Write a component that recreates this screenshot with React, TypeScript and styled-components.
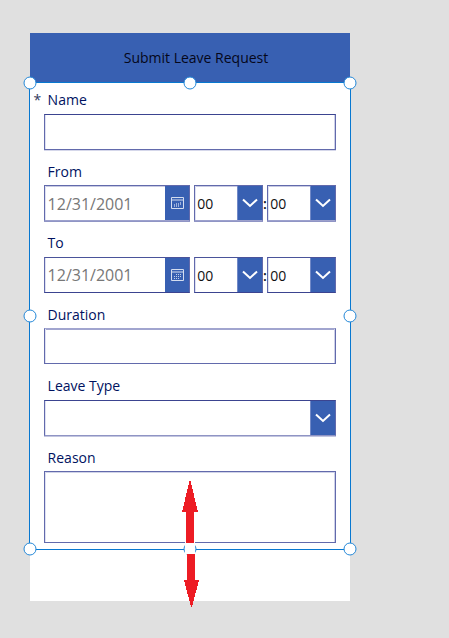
import React from "react";
import styled, { createGlobalStyle } from "styled-components";

const GlobalStyle = createGlobalStyle`
  * { box-sizing: border-box; }
  body { margin: 0; background: #e0e0e0; font-family: "Open Sans", sans-serif; }
`;

const Canvas = styled.main`
  width: 449px;
  height: 638px;
  padding: 33px 0 0 30px;
  overflow: hidden;
  background: #e0e0e0;
`;

const Screen = styled.section`
  position: relative;
  width: 320px;
  height: 568px;
  background: #fff;
`;

const Header = styled.header`
  height: 50px;
  display: flex;
  align-items: center;
  justify-content: center;
  padding-left: 12px;
  background: #3860b2;
  color: #05071a;
  font-size: 14px;
  line-height: 20px;
`;

const Form = styled.div`
  display: grid;
  grid-template-rows: 71px 72px 71px 72px 71px 108px;
  padding: 7px 14px 0;
`;

const Field = styled.div<{ $low?: boolean }>`
  display: flex;
  flex-direction: column;
  padding-top: ${(p) => (p.$low ? 1 : 0)}px;
`;

const Label = styled.label`
  display: flex;
  height: 20px;
  padding-left: 3.6px;
  color: #00125f;
  font-size: 14px;
  line-height: 20px;
`;

const Required = styled.span`
  width: 14px;
  margin-left: -14px;
  color: #333a5c;
`;

const FieldBody = styled.div<{ $low?: boolean }>`
  display: flex;
  justify-content: space-between;
  margin-top: ${(p) => (p.$low ? 3 : 4)}px;
`;

const Box = styled.div<{ $width: number; $height?: number; $edge: Edge }>`
  display: flex;
  flex: none;
  width: ${(p) => p.$width}px;
  height: ${(p) => p.$height ?? 36}px;
  border: 1px solid #626aac;
  border-top-color: ${(p) => p.$edge.top};
  border-bottom-color: ${(p) => p.$edge.bottom};
  box-shadow: inset 1px 0 #dfe1f1, inset -1px 0 #cdd0e8,
    inset 0 1px ${(p) => p.$edge.inner}, 0 1px ${(p) => p.$edge.outer};
`;

const Value = styled.span<{ $date?: boolean; $low?: boolean }>`
  flex: 1;
  padding-left: ${(p) => (p.$date ? 2.6 : 2.3)}px;
  padding-top: ${(p) => (p.$low ? 1 : 0)}px;
  color: ${(p) => (p.$date ? "#777" : "#111")};
  font-size: ${(p) => (p.$date ? 16 : 14)}px;
  line-height: ${(p) => (p.$date ? 34 : 36)}px;
`;

const Action = styled.div<{ $narrow?: boolean }>`
  display: flex;
  width: ${(p) => (p.$narrow ? 24 : 25)}px;
  align-items: center;
  justify-content: center;
  border-left: 1px solid ${(p) => (p.$narrow ? "#3860b2" : "#7189c7")};
  background: #3860b2;
`;

const Colon = styled.span`
  width: 4px;
  color: #080c20;
  font-size: 14px;
  font-weight: 600;
  line-height: 37px;
`;

const TimePair = styled.div`
  display: flex;
`;

const Selection = styled.div`
  position: absolute;
  left: -1px;
  top: 49px;
  width: 322px;
  height: 468px;
  border: 1px solid #0878d0;
  pointer-events: none;
`;

const Handle = styled.i<{ $x: string; $y: string }>`
  position: absolute;
  left: ${(p) => p.$x};
  top: ${(p) => p.$y};
  width: 13px;
  height: 13px;
  border: 1px solid #2488d8;
  border-radius: 50%;
  background: #fff;
  transform: translate(-50%, -50%);
`;

const Arrows = styled.svg`
  position: absolute;
  left: 150px;
  top: 447px;
`;

interface Edge {
  top: string;
  bottom: string;
  inner: string;
  outer: string;
}

const edges: Record<string, Edge> = {
  crisp: { top: "#3b4490", bottom: "#626aac", inner: "transparent", outer: "#d5d7ea" },
  from: { top: "#626aac", bottom: "#9da1cd", inner: "#c8cae2", outer: "#9095c5" },
  to: { top: "#4a539a", bottom: "#3b4490", inner: "transparent", outer: "transparent" },
  duration: { top: "#a1a5cf", bottom: "#626aac", inner: "#a1a5cf", outer: "transparent" },
  type: { top: "#3b4490", bottom: "#8f94c4", inner: "transparent", outer: "#c2c5df" },
  reason: { top: "#626aac", bottom: "#626aac", inner: "#d0d3e8", outer: "transparent" },
};

const Chevron = () => (
  <svg width="16" height="10" viewBox="0 0 16 10" fill="none">
    <path d="M1 1.5 8 8 15 1.5" stroke="#fff" strokeWidth="2" />
  </svg>
);

const Calendar = ({ bars }: { bars?: boolean }) => (
  <svg width="13" height="12" viewBox="0 0 13 12" fill="none">
    <path d="M.5.5h12v11H.5zM.5 3h12" stroke="#d4ddef" />
    {bars ? (
      <path d="M3.5 7v3M5.5 6v4M7.5 6v4M9.5 5v3" stroke="#9db1dc" />
    ) : (
      <path d="M5 5.5h6M3 7.5h8M3 9.5h6" stroke="#c2cfe9" strokeDasharray="1 1" />
    )}
  </svg>
);

const Dropdown = ({ width, value, edge }: { width: number; value?: string; edge: Edge }) => (
  <Box $width={width} $edge={edge}>
    <Value>{value}</Value>
    <Action><Chevron /></Action>
  </Box>
);

const DateTime = ({ edge, low }: { edge: Edge; low?: boolean }) => (
  <FieldBody $low={low}>
    <Box $width={146} $edge={edge}>
      <Value $date $low={low}>12/31/2001</Value>
      <Action $narrow><Calendar bars={low} /></Action>
    </Box>
    <TimePair>
      <Dropdown width={69} value="00" edge={edge} />
      <Colon>:</Colon>
      <Dropdown width={69} value="00" edge={edge} />
    </TimePair>
  </FieldBody>
);

const handles = [
  ["0", "0"], ["50%", "0"], ["100%", "0"],
  ["0", "50%"], ["100%", "50%"],
  ["0", "100%"], ["50%", "100%"], ["100%", "100%"],
];

export default function App() {
  return (
    <>
      <GlobalStyle />
      <Canvas>
        <Screen>
          <Header>Submit Leave Request</Header>
          <Form>
            <Field>
              <Label><Required>*</Required>Name</Label>
              <FieldBody><Box $width={292} $edge={edges.crisp} /></FieldBody>
            </Field>
            <Field $low>
              <Label>From</Label>
              <DateTime edge={edges.from} low />
            </Field>
            <Field>
              <Label>To</Label>
              <DateTime edge={edges.to} />
            </Field>
            <Field $low>
              <Label>Duration</Label>
              <FieldBody $low><Box $width={292} $edge={edges.duration} /></FieldBody>
            </Field>
            <Field>
              <Label>Leave Type</Label>
              <FieldBody><Dropdown width={292} edge={edges.type} /></FieldBody>
            </Field>
            <Field $low>
              <Label>Reason</Label>
              <FieldBody $low><Box $width={292} $height={72} $edge={edges.reason} /></FieldBody>
            </Field>
          </Form>
          <Selection>
            {handles.map(([x, y]) => <Handle key={x + y} $x={x} $y={y} />)}
          </Selection>
          <Arrows width="22" height="128" viewBox="0 0 22 128" shapeRendering="crispEdges">
            <path d="M5 62h10v12H5z" fill="#fff" />
            <path d="M9.5 1h1L18 32H14V63H6V32H2zM7 74h8v26h4l-7 27h-1L4 100h3z" fill="#ed1c24" />
          </Arrows>
        </Screen>
      </Canvas>
    </>
  );
}
